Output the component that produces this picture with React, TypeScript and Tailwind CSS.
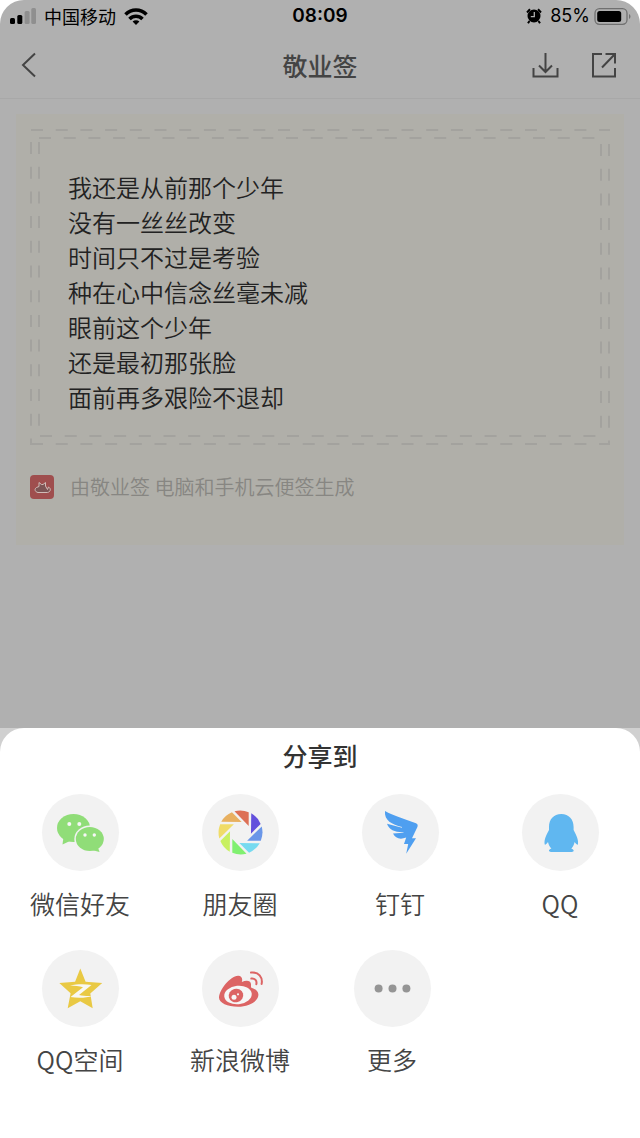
import React from 'react';

const lines = [
  '我还是从前那个少年',
  '没有一丝丝改变',
  '时间只不过是考验',
  '种在心中信念丝毫未减',
  '眼前这个少年',
  '还是最初那张脸',
  '面前再多艰险不退却',
];

const blades = ['#dd7055', '#6350dc', '#6a96e8', '#76daf0', '#80f070', '#c8f060', '#f0dc68', '#e8b060'];

function WechatIcon() {
  return (
    <svg viewBox="0 0 77 77" className="size-full">
      <g fill="#90dd78">
        <ellipse cx="31.5" cy="34" rx="16.5" ry="14" />
        <path d="M21.5 43 20.5 50.5 29 46.5z" />
      </g>
      <ellipse cx="47.8" cy="45" rx="15.5" ry="13.5" fill="#f2f2f2" />
      <g fill="#90dd78">
        <ellipse cx="47.8" cy="45" rx="14" ry="12" />
        <path d="M50 56 57.5 58 55.5 52z" />
      </g>
      <g fill="#f6f6f6">
        <circle cx="27.3" cy="30" r="2" />
        <circle cx="37.3" cy="30" r="2" />
        <circle cx="43" cy="41" r="1.7" />
        <circle cx="52.3" cy="41" r="1.7" />
      </g>
    </svg>
  );
}

function MomentsIcon() {
  return (
    <svg viewBox="0 0 77 77" className="size-full">
      <g transform="translate(38.5 38.5)">
        {blades.map((color, i) => (
          <path key={color} d="M-6-21.2A22 22 0 0 1 8.2-20.3V-6.6z" fill={color} transform={`rotate(${i * 45})`} />
        ))}
      </g>
    </svg>
  );
}

function DingTalkIcon() {
  return (
    <svg viewBox="0 0 77 77" className="size-full" fill="#4f9ff0">
      <path d="M23 17C31 21.5 43 25 54 29.3C55.8 30 56 31.3 55.4 33L50 44.2H54L44.2 59.8L46.2 50H42L44.2 43.6C38 46 33.5 44.5 31 39.6L41.5 38.8V38.2C33 38.4 27 36 25 29.8L40 33.8V33C30 30.5 22 26.5 23 17z" />
    </svg>
  );
}

function QQIcon() {
  return (
    <svg viewBox="0 0 77 77" className="size-full" fill="#60b7f0">
      <path d="M39.3 20C31.5 20 27 25.5 27 33V36C24.5 40.5 22 45.5 22.6 50C22.8 51.6 24 50.5 26 48C26.6 50.8 27.8 52.8 29.4 54.6C27.5 55.4 26.8 56 27 57C27.2 58 30 58 33 58H45.600C49 58 51.6 58 51.7 57C51.8 56 51 55.4 49.3 54.6C50.9 52.8 52 50.8 52.6 48C54.6 50.5 55.8 51.6 56 50C56.6 45.5 54 40.5 51.6 36V33C51.6 25.5 47 20 39.3 20z" />
    </svg>
  );
}

function QzoneIcon() {
  return (
    <svg viewBox="0 0 77 77" className="size-full">
      <path
        d="M38.3 18.5 43.6 31.8 60.2 33 48.3 43.5 50.7 58.3 38.3 51.3 25.7 58.3 28.6 43.2 17.3 33 33.1 31.8z"
        fill="#e9c944"
      />
      <path d="M28 35.5C35 34 43 34 49.5 35L37 45C42 46 46 46.3 50.5 45.8C44 48.3 35 48.2 28.5 47L41 37.3C37 36 33 35.6 28 35.5z" fill="#f8f8f4" />
    </svg>
  );
}

function WeiboIcon() {
  return (
    <svg viewBox="0 0 77 77" className="size-full" fill="#dc6464">
      <path d="M17 47.5C17.500 39 28 26.500 36 25.700C39.500 25.500 41 28.500 39.800 32C44 30.200 48.500 30.200 49 34C49.200 35.800 48.600 37 49.400 37.800C53.500 39 56.600 41.500 56.400 45C56 51.500 46.500 56.700 36 56.700C25.500 56.700 17 53 17 47.500z" />
      <ellipse cx="36" cy="45" rx="13.800" ry="9.300" fill="#f6f6f6" transform="rotate(-6 36 45)" />
      <ellipse cx="34" cy="45.500" rx="7.300" ry="6.800" transform="rotate(-15 34 45.500)" />
      <circle cx="32" cy="47.300" r="2.500" fill="#f6f6f6" />
      <circle cx="36" cy="44.300" r="1.100" fill="#f6f6f6" />
      <g fill="none" stroke="#dc6464" strokeWidth="2" strokeLinecap="round">
        <path d="M49 22.500C56.500 21.500 61 27.500 59.600 34" />
        <path d="M49.300 28.500C53 28 55.200 31 54.300 34.200" />
      </g>
    </svg>
  );
}

function MoreIcon() {
  return (
    <svg viewBox="0 0 77 77" className="size-full" fill="#959595">
      <circle cx="24.6" cy="38.5" r="4" />
      <circle cx="38.5" cy="38.5" r="4" />
      <circle cx="52.4" cy="38.5" r="4" />
    </svg>
  );
}

interface ShareItemProps {
  label: string;
  width?: string;
  children: React.ReactNode;
}

function ShareItem({ label, width = 'w-1/4', children }: ShareItemProps) {
  return (
    <button type="button" className={`${width} flex flex-col items-center gap-[14px]`}>
      <span className="flex size-[77px] items-center justify-center rounded-full bg-[#f2f2f2]">{children}</span>
      <span className="text-[25px] font-[350] leading-9 text-[#444]">{label}</span>
    </button>
  );
}

function StatusBar() {
  return (
    <div className="grid h-8 grid-cols-3 items-center px-2 text-black">
      <div className="flex items-center gap-2">
        <svg viewBox="0 0 28 16" className="h-4 w-7">
          <rect x="2" y="10" width="5" height="6" rx="1.5" />
          <rect x="9.3" y="7" width="5" height="9" rx="1.5" />
          <rect x="16.6" y="3" width="5" height="13" rx="1.5" fill="#8f8f8f" />
          <rect x="23.3" y="0" width="4.7" height="16" rx="1.5" fill="#8f8f8f" />
        </svg>
        <span className="text-[18px] leading-6">中国移动</span>
        <svg viewBox="0 0 24 17" className="h-[17px] w-6" fill="none" stroke="#000" strokeWidth="3.6">
          <path d="M1.5 6.5C7.5.5 16.5.5 22.5 6.5" />
          <path d="M5.5 11C9.3 7.3 14.7 7.3 18.5 11" />
          <path d="M12 17 8.6 13.5C10.5 11.8 13.5 11.8 15.4 13.5z" fill="#000" stroke="none" />
        </svg>
      </div>
      <span className="text-center font-[Inter] text-[19px] font-semibold leading-6">08:09</span>
      <div className="flex items-center justify-end gap-1">
        <svg viewBox="0 0 16 16" className="mr-1 size-4">
          <circle cx="8" cy="8" r="6.5" />
          <path d="M1 4.5 4 1.3M15 4.5 12 1.3M3.5 13 2 15.3M12.5 13 14 15.3" stroke="#000" strokeWidth="2" />
          <path d="M8.3 4V8.7H4.8" stroke="#b0b0b0" strokeWidth="1.3" fill="none" />
        </svg>
        <span className="font-[Inter] text-[18px] leading-6">85%</span>
        <svg viewBox="0 0 38 17" className="h-[17px] w-[38px]">
          <rect x="1" y=".7" width="32" height="15.6" rx="4.5" fill="none" stroke="#707070" strokeWidth="1.3" />
          <rect x="3.2" y="3" width="24" height="11" rx="2.5" />
          <path d="M35 6C37 7 37 10 35 11z" fill="#707070" />
        </svg>
      </div>
    </div>
  );
}

function Header() {
  return (
    <header className="grid h-[67px] grid-cols-3 items-center border-b border-[#a8a8a8] px-[21px] text-[#444]">
      <button type="button" aria-label="返回" className="justify-self-start">
        <svg viewBox="0 0 18 26" className="h-[26px] w-[18px]" fill="none" stroke="currentColor" strokeWidth="2">
          <path d="M14 1.500 2 13 14 24.500" />
        </svg>
      </button>
      <h1 className="text-center text-[25px] font-medium leading-9">敬业签</h1>
      <div className="flex justify-end gap-8">
        <button type="button" aria-label="下载">
          <svg viewBox="0 0 28 26" className="h-[26px] w-7" fill="none" stroke="currentColor" strokeWidth="2">
            <path d="M2.5 16V24.5H26.5V16M14.5 1V19.5M8 13.5 14.5 20 21 13.5" />
          </svg>
        </button>
        <button type="button" aria-label="分享">
          <svg viewBox="0 0 28 26" className="h-[26px] w-7" fill="none" stroke="currentColor" strokeWidth="2">
            <path d="M11 2H2V24.5H24V16M14.5 2H24V11.5M24 2 11 15.5" />
          </svg>
        </button>
      </div>
    </header>
  );
}

function DashedFrame() {
  return (
    <div className="pointer-events-none absolute inset-0">
      <svg className="absolute inset-0 size-full" stroke="#a3a29e" strokeWidth="2" strokeDasharray="12 12.7">
        <line x1="1" y1="1" x2="100%" y2="1" />
        <line x1="1" y1="100%" x2="100%" y2="100%" transform="translate(0 -1)" />
        <line x1="1" y1="13" x2="1" y2="100%" />
        <line x1="100%" y1="15" x2="100%" y2="100%" transform="translate(-1 0)" />
      </svg>
      <div className="absolute inset-2">
        <svg className="size-full" stroke="#a3a29e" strokeWidth="2" strokeDasharray="12 12.7">
          <line x1="1" y1="1" x2="100%" y2="1" />
          <line x1="2" y1="100%" x2="100%" y2="100%" transform="translate(0 -1)" />
          <line x1="1" y1="5" x2="1" y2="100%" />
          <line x1="100%" y1="7" x2="100%" y2="100%" transform="translate(-1 0)" />
        </svg>
      </div>
    </div>
  );
}

function NoteCard() {
  return (
    <article className="mx-4 mt-[15px] bg-[#b0afa9] px-[14px] pt-[15px] pb-[42px]">
      <div className="relative px-[38px] pt-10 pb-[31px]">
        <DashedFrame />
        {lines.map((line) => (
          <p key={line} className="text-[24px] font-[350] leading-[35px] text-[#222]">{line}</p>
        ))}
      </div>
      <footer className="mt-[26px] flex items-center gap-4">
        <svg viewBox="0 0 24 24" className="size-6">
          <rect width="24" height="24" rx="4" fill="#9f4e4e" />
          <path
            d="M8 17.5C5 17 4 14 6.5 12.5L9 11.5V7.5L11.5 9.5H13L15.5 7.5V11L17.5 14.5 18.5 12C21.5 13.5 20.5 17 17.5 17.5z"
            fill="#7d5555"
            stroke="#d0bcb8"
            strokeWidth="1"
          />
        </svg>
        <p className="text-[20px] font-[350] leading-8 text-[#878682]">由敬业签 电脑和手机云便签生成</p>
      </footer>
    </article>
  );
}

export default function App() {
  return (
    <div className="flex min-h-screen flex-col bg-white font-['Noto_Sans_CJK_SC',sans-serif]">
      <main className="grow rounded-t-3xl bg-[#b0b0b0]">
        <StatusBar />
        <Header />
        <NoteCard />
      </main>
      <div className="bg-[#d0d0d0]">
        <section className="rounded-t-3xl bg-white pt-[9px] pb-[59px]">
          <h2 className="text-center text-[25px] font-medium leading-9 text-[#333]">分享到</h2>
          <div className="mt-[21px] flex flex-wrap gap-y-[29px] pb-[2px]">
            <ShareItem label="微信好友"><WechatIcon /></ShareItem>
            <ShareItem label="朋友圈"><MomentsIcon /></ShareItem>
            <ShareItem label="钉钉"><DingTalkIcon /></ShareItem>
            <ShareItem label="QQ"><QQIcon /></ShareItem>
            <ShareItem label="QQ空间"><QzoneIcon /></ShareItem>
            <ShareItem label="新浪微博"><WeiboIcon /></ShareItem>
            <ShareItem label="更多" width="w-36"><MoreIcon /></ShareItem>
          </div>
        </section>
      </div>
    </div>
  );
}
